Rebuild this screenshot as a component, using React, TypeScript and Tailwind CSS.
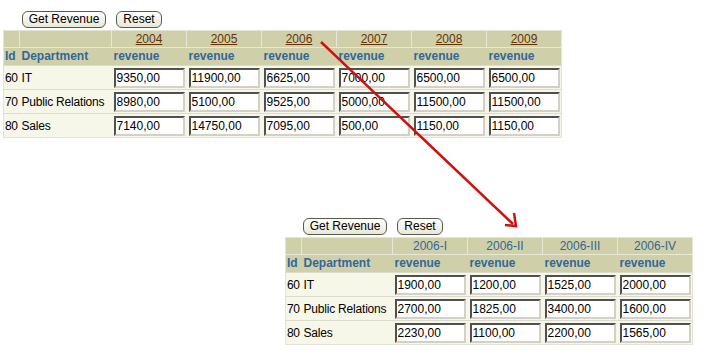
import React from "react";

type Row = { id: number; dept: string; vals: string[] };

const top: Row[] = [
  { id: 60, dept: "IT", vals: ["9350,00", "11900,00", "6625,00", "7000,00", "6500,00", "6500,00"] },
  { id: 70, dept: "Public Relations", vals: ["8980,00", "5100,00", "9525,00", "5000,00", "11500,00", "11500,00"] },
  { id: 80, dept: "Sales", vals: ["7140,00", "14750,00", "7095,00", "500,00", "1150,00", "1150,00"] },
];

const bottom: Row[] = [
  { id: 60, dept: "IT", vals: ["1900,00", "1200,00", "1525,00", "2000,00"] },
  { id: 70, dept: "Public Relations", vals: ["2700,00", "1825,00", "3400,00", "1600,00"] },
  { id: 80, dept: "Sales", vals: ["2230,00", "1100,00", "2200,00", "1565,00"] },
];

function Buttons() {
  return (
    <div className="flex gap-[10px] h-[19px]">
      <button className="w-[84px] h-[17px] rounded-[6px] border border-[#5a5a4a] bg-gradient-to-b from-[#ffffff] to-[#e8e8d8] text-[12px] leading-[15px] text-black">
        Get Revenue
      </button>
      <button className="w-[46px] h-[17px] rounded-[6px] border border-[#5a5a4a] bg-gradient-to-b from-[#ffffff] to-[#e8e8d8] text-[12px] leading-[15px] text-black">
        Reset
      </button>
    </div>
  );
}

function Grid({ cols, rows, link, deptW }: { cols: string[]; rows: Row[]; link: boolean; deptW: number }) {
  return (
    <table className="table-fixed border-collapse border border-[#e4e4d4]" style={{ width: 16 + deptW + cols.length * 75 }}>
      <colgroup>
        <col className="w-[16px]" />
        <col style={{ width: deptW }} />
        {cols.map((c) => (
          <col key={c} className="w-[75px]" />
        ))}
      </colgroup>
      <tbody>
        <tr className="h-[17px] bg-[#cfd0aa]">
          <td className="border-r border-[#e8e8d8]" />
          <td className="border-r border-[#e8e8d8]" />
          {cols.map((c) => (
            <td key={c} className="border-r border-[#e8e8d8] text-center text-[12px] leading-[15px]">
              {link ? (
                <span className="text-[#663300] underline">{c}</span>
              ) : (
                <span className="text-[#336699]">{c}</span>
              )}
            </td>
          ))}
        </tr>
        <tr className="h-[18px] bg-[#cfd0aa] border-t border-[#e8e8d8] text-[#336699] font-bold text-[12px] leading-[15px]">
          <td className="pl-[1px] overflow-hidden">Id</td>
          <td className="pl-[2px] whitespace-nowrap">Department</td>
          {cols.map((c) => (
            <td key={c} className="pl-[2px]">revenue</td>
          ))}
        </tr>
        {rows.map((r) => (
          <tr key={r.id} className="h-[24px] bg-[#f7f7e9] border-t border-[#dcdccc] text-[12px]">
            <td className="pl-[1px] whitespace-nowrap overflow-visible tracking-[-0.3px]">{r.id}</td>
            <td className="pl-[2px] whitespace-nowrap tracking-[-0.2px]">{r.dept}</td>
            {r.vals.map((v, i) => (
              <td key={i} className="pl-[2px]">
                <input
                  readOnly
                  value={v}
                  className="w-[71px] h-[20px] bg-white border-2 border-t-[#505050] border-l-[#505050] border-b-[#d4d0c8] border-r-[#d4d0c8] px-[1px] text-[12px] text-black outline-none"
                />
              </td>
            ))}
          </tr>
        ))}
      </tbody>
    </table>
  );
}

export default function App() {
  return (
    <div
      className="relative w-[703px] h-[354px] bg-white overflow-hidden text-black"
      style={{ fontFamily: "'Liberation Sans', Arial, sans-serif" }}
    >
      <div className="pt-[11px]">
        <div className="ml-[22px]">
          <Buttons />
        </div>
        <div className="ml-[3px]">
          <Grid cols={["2004", "2005", "2006", "2007", "2008", "2009"]} rows={top} link deptW={92} />
        </div>
      </div>
      <div className="mt-[80px]">
        <div className="ml-[303px]">
          <Buttons />
        </div>
        <div className="ml-[285px]">
          <Grid cols={["2006-I", "2006-II", "2006-III", "2006-IV"]} rows={bottom} link={false} deptW={91} />
        </div>
      </div>
      <svg className="absolute left-0 top-0 pointer-events-none" width="703" height="354">
        <line x1="321" y1="42" x2="513" y2="224" stroke="#d01010" strokeWidth="2.5" />
        <path d="M505 225 L516 226 L514 213" fill="none" stroke="#d01010" strokeWidth="2.5" />
      </svg>
    </div>
  );
}
